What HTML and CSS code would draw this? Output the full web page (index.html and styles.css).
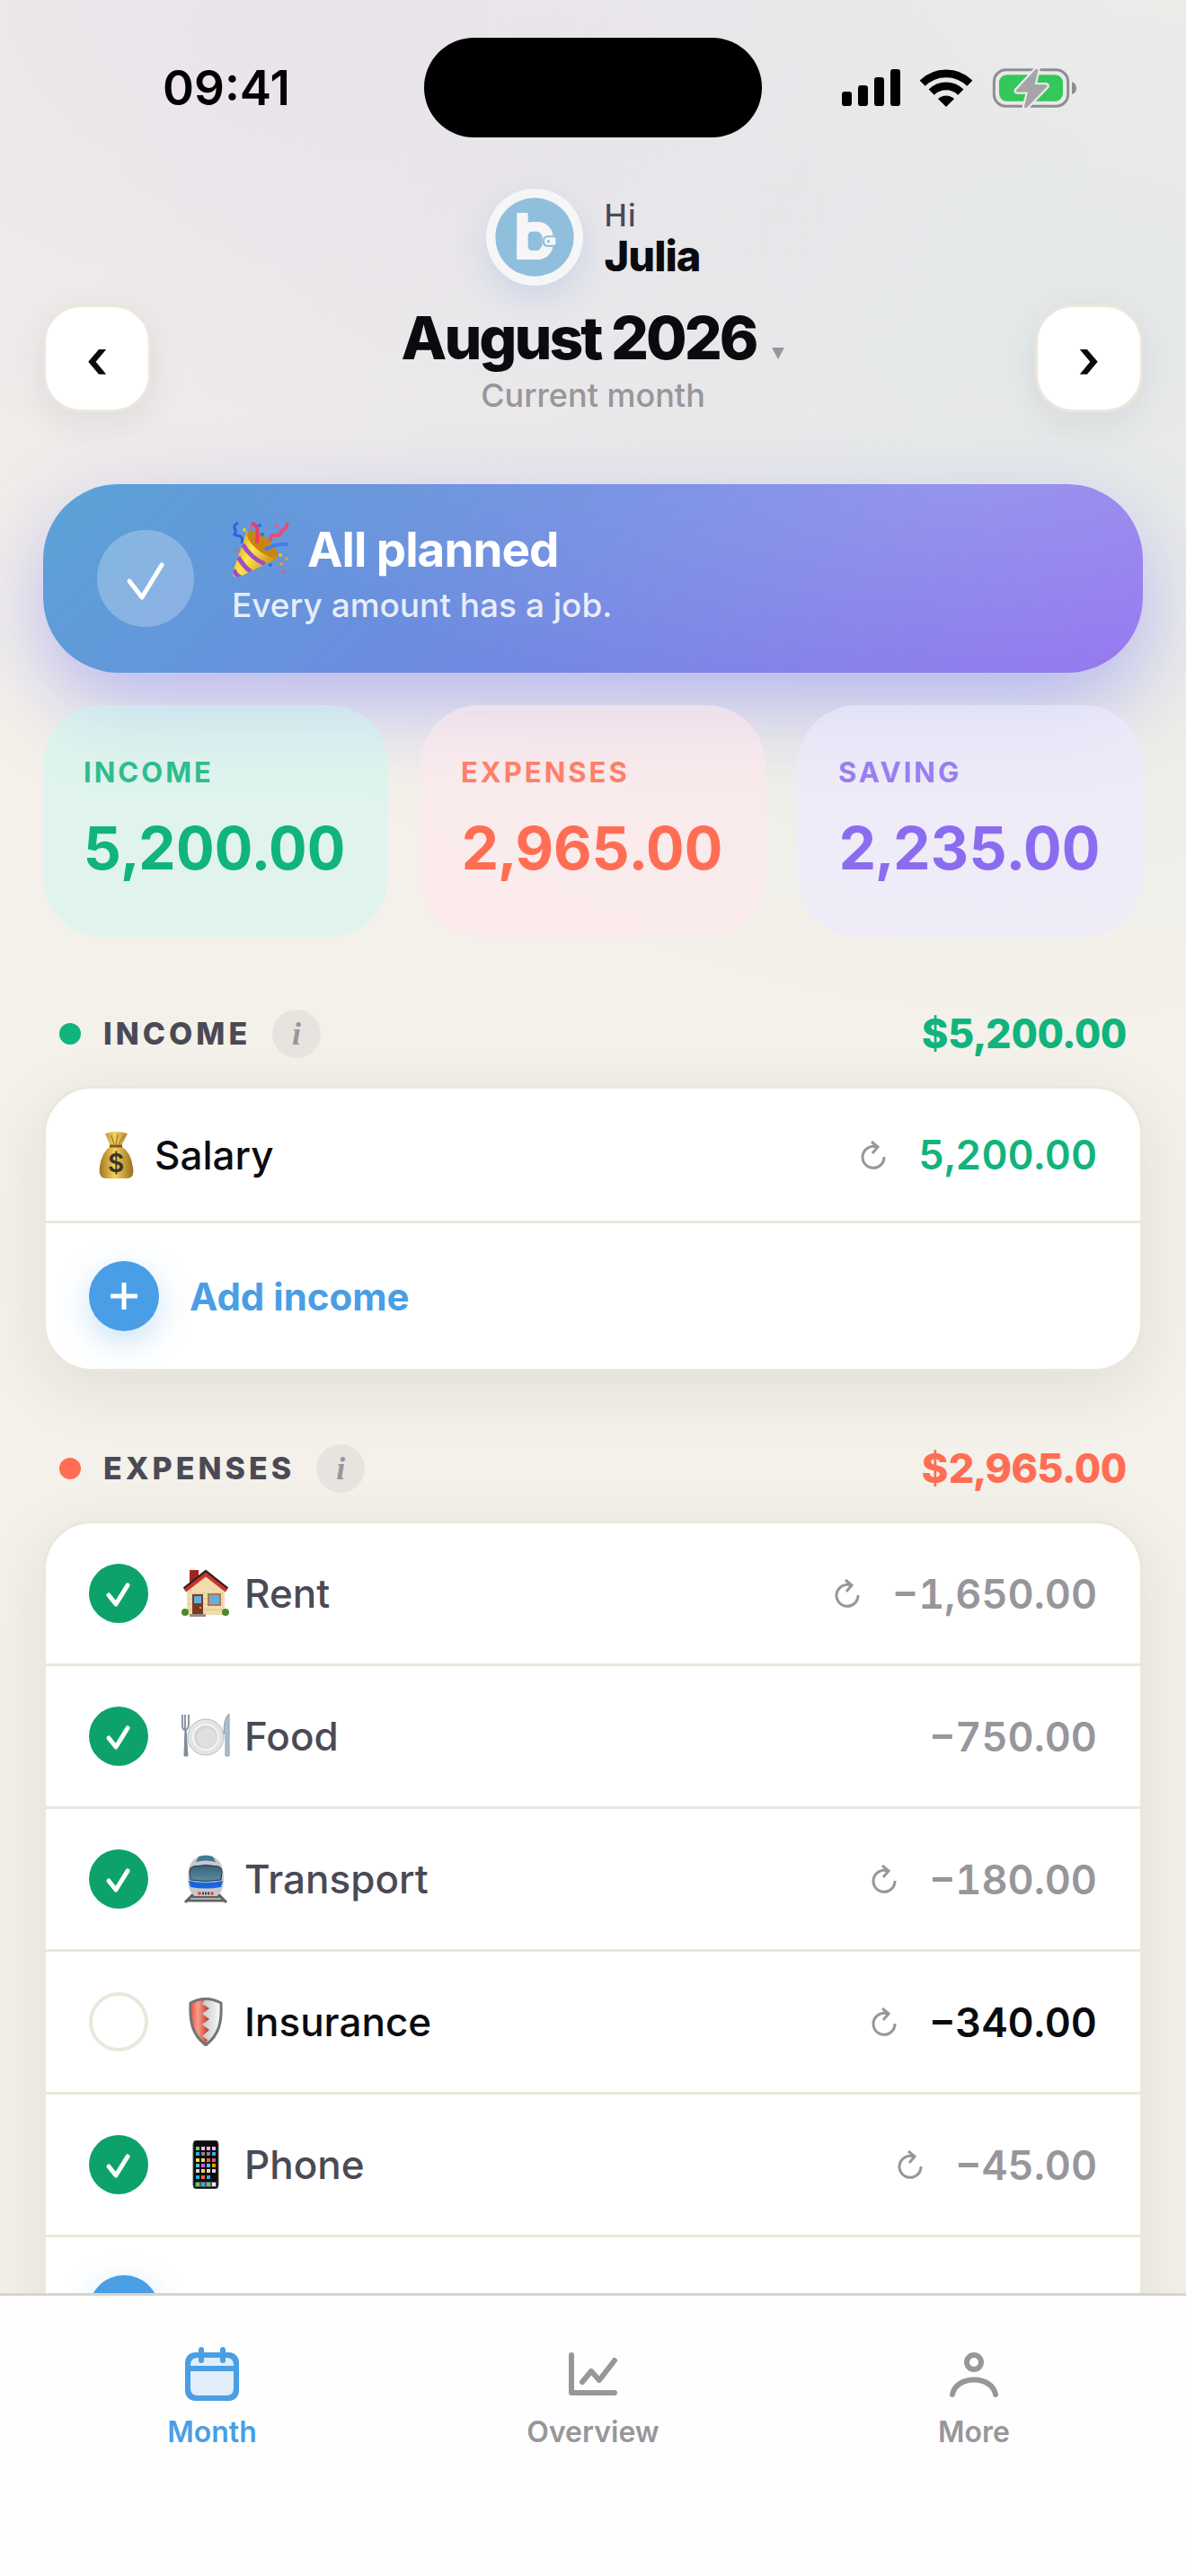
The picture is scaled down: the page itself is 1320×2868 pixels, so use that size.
FILE: index.html
```html
<!DOCTYPE html>
<html lang="en">
<head>
    <meta charset="UTF-8">
    <meta name="viewport" content="width=device-width, initial-scale=1.0">
    <title>August 2026</title>
    <link rel="stylesheet" href="styles.css">
</head>
<body>
    <!-- shared icons -->
    <svg class="sprite" aria-hidden="true">
        <symbol id="repeat" viewBox="0 0 28 32">
            <path d="M26 18A12 12 0 1 1 18 7M12 1L19 7L13 14" fill="none" stroke="currentColor" stroke-width="3"/>
        </symbol>
        <symbol id="tick" viewBox="0 0 66 66">
            <path d="M22 35L30 45L43 24" fill="none" stroke="#fff" stroke-width="5" stroke-linecap="round" stroke-linejoin="round"/>
        </symbol>
        <symbol id="plus" viewBox="0 0 32 32">
            <path d="M16 1V31M1 16H31" fill="none" stroke="#fff" stroke-width="5"/>
        </symbol>
    </svg>

    <div class="app">
        <div class="status">
            <span class="time">09:41</span>
            <span class="island"></span>
            <div class="status-icons">
                <svg width="65" height="41" viewBox="111 78 195 123">
                    <rect x="111" y="153" width="33" height="48" rx="10"/>
                    <rect x="165" y="132" width="33" height="69" rx="10"/>
                    <rect x="219" y="105" width="33" height="96" rx="10"/>
                    <rect x="273" y="78" width="33" height="123" rx="10"/>
                </svg>
                <svg width="58" height="42" viewBox="373 75 174 126">
                    <path d="M381 122A112 112 0 0 1 539 122M411 152A69 69 0 0 1 509 152" fill="none" stroke="#000" stroke-width="26"/>
                    <path d="M460 201L433 174A39 39 0 0 1 487 174Z"/>
                </svg>
                <svg width="95" height="48" viewBox="612 67 285 144">
                    <rect x="619" y="78" width="247" height="122" rx="40" fill="none" stroke="#8e8d91" stroke-width="9"/>
                    <path d="M879 119Q894 124 894 140T879 160Z" fill="#8e8d91"/>
                    <rect x="636" y="95" width="213" height="88" rx="26" fill="#34c759"/>
                    <path d="M760 76L694 147Q692 151 696 151H734L721 202Q724 207 728 203L795 134Q797 130 793 129H753L765 78Z" fill="#a5a4a7" stroke="#ebe9ec" stroke-width="16" stroke-linejoin="round"/>
                    <path d="M760 76L694 147Q692 151 696 151H734L721 202Q724 207 728 203L795 134Q797 130 793 129H753L765 78Z" fill="#a5a4a7" stroke="#a5a4a7" stroke-width="3" stroke-linejoin="round"/>
                </svg>
            </div>
        </div>

        <main class="content">
            <div class="profile">
                <svg class="avatar" viewBox="0 0 324 324">
                    <circle cx="162" cy="162" r="162" fill="#f6f6f7"/>
                    <circle cx="162" cy="162" r="131" fill="#90bfde"/>
                    <rect x="103" y="81" width="37" height="156" rx="4" fill="#f6f6f7"/>
                    <rect x="122" y="129" width="84" height="90" rx="34" fill="none" stroke="#f6f6f7" stroke-width="36"/>
                    <rect x="103" y="180" width="50" height="57" rx="3" fill="#f6f6f7"/>
                    <rect x="140" y="143" width="43" height="64" rx="14" fill="#90bfde"/>
                    <rect x="188" y="157" width="54" height="38" rx="17" fill="#90bfde"/>
                    <path d="M207 163H228Q232 163 232 167V184Q232 188 228 188H207A12 12 0 0 1 207 163Z" fill="#f6f6f7"/>
                    <circle cx="208" cy="176" r="5" fill="#90bfde"/>
                </svg>
                <div>
                    <p class="hi">Hi</p>
                    <p class="name">Julia</p>
                </div>
            </div>

            <header class="month">
                <button class="arrow" aria-label="Previous month">‹</button>
                <div class="month-text">
                    <button class="month-title">August 2026<svg width="14" height="13" viewBox="0 0 14 13"><path d="M0 0H14L7 13Z" fill="#98969b"/></svg></button>
                    <p>Current month</p>
                </div>
                <button class="arrow" aria-label="Next month">›</button>
            </header>

            <section class="banner">
                <svg class="banner-check" viewBox="0 0 108 108">
                    <circle cx="54" cy="54" r="54" fill="#fff" fill-opacity=".25"/>
                    <path d="M36 57L50 75L72 39" fill="none" stroke="#fff" stroke-width="5" stroke-linecap="round" stroke-linejoin="round"/>
                </svg>
                <div class="banner-text">
                    <h2>
                        <svg width="64" height="64" viewBox="0 0 64 64">
                            <defs>
                                <linearGradient id="cone" x1="0" y1="0" x2="1" y2=".6"><stop offset="0" stop-color="#c98a12"/><stop offset=".5" stop-color="#ffe74a"/><stop offset="1" stop-color="#c8870f"/></linearGradient>
                                <clipPath id="cone-clip"><path d="M17 11L51 38Q52 43 44 45L7 63Q1 63 1 57Z"/></clipPath>
                            </defs>
                            <path d="M17 11L51 38Q52 43 44 45L7 63Q1 63 1 57Z" fill="url(#cone)"/>
                            <path d="M12 26Q22 42 37 48M7 40Q14 52 22 57M2 54Q4 60 10 63" clip-path="url(#cone-clip)" fill="none" stroke="#9b4fc9" stroke-width="5"/>
                            <ellipse cx="34" cy="26" rx="21" ry="8" transform="rotate(39 34 26)" fill="#c98514"/>
                            <path d="M22 3C30 4 29 14 28 25" fill="none" stroke="#ee3b62" stroke-width="4"/>
                            <path d="M43 23C43 10 52 20 54 14S60 12 62 2" fill="none" stroke="#e94a78" stroke-width="4"/>
                            <path d="M37 32Q48 25 63 26" fill="none" stroke="#3d7ff0" stroke-width="4"/>
                            <path d="M7 2C-3 8 8 8 3 15C4 18 14 13 11 25" fill="none" stroke="#2c65dd" stroke-width="3"/>
                            <g fill="#2c6de0"><circle cx="31" cy="5" r="2"/><circle cx="34" cy="15" r="2"/><circle cx="43" cy="49" r="2"/></g>
                            <g fill="#f0be35"><circle cx="14" cy="10" r="2"/><circle cx="54" cy="38" r="2"/></g>
                            <g fill="#f3962e"><circle cx="61" cy="42" r="2"/><circle cx="55" cy="48" r="2"/></g>
                            <g fill="#e55b87"><circle cx="50" cy="5" r="2"/><circle cx="57" cy="56" r="2"/><circle cx="6" cy="33" r="2"/><circle cx="21" cy="7" r="2"/></g>
                        </svg>
                        All planned
                    </h2>
                    <p>Every amount has a job.</p>
                </div>
            </section>

            <section class="totals">
                <div class="total total-income"><h3>INCOME</h3><p>5,200.00</p></div>
                <div class="total total-expenses"><h3>EXPENSES</h3><p>2,965.00</p></div>
                <div class="total total-saving"><h3>SAVING</h3><p>2,235.00</p></div>
            </section>

            <section>
                <div class="section-head income">
                    <span class="dot"></span>
                    <h2>INCOME</h2>
                    <button class="info" aria-label="About income">i</button>
                    <strong>$5,200.00</strong>
                </div>
                <ul class="list">
                    <li class="row row-income">
                        <svg class="emoji" viewBox="0 0 54 54">
                            <defs><linearGradient id="bag"><stop offset="0" stop-color="#a37322"/><stop offset=".45" stop-color="#f2d15e"/><stop offset="1" stop-color="#9c6b1c"/></linearGradient></defs>
                            <path d="M15 3Q27 -1 40 3L33 17Q44 24 46 41Q48 53 39 53H16Q7 53 9 40Q11 24 21 17Z" fill="url(#bag)"/>
                            <path d="M20 17H34" stroke="#85561a" stroke-width="3"/>
                            <path d="M22 5L25 15M29 4L27 15M36 5L30 15" stroke="#95661d" stroke-width="1"/>
                            <text x="27" y="46" text-anchor="middle" class="dollar">$</text>
                        </svg>
                        <span class="label">Salary</span>
                        <svg class="repeat"><use href="#repeat"/></svg>
                        <span class="amount">5,200.00</span>
                    </li>
                    <li>
                        <button class="add"><span class="add-icon"><svg width="32" height="32"><use href="#plus"/></svg></span>Add income</button>
                    </li>
                </ul>
            </section>

            <section>
                <div class="section-head expenses">
                    <span class="dot"></span>
                    <h2>EXPENSES</h2>
                    <button class="info" aria-label="About expenses">i</button>
                    <strong>$2,965.00</strong>
                </div>
                <ul class="list">
                    <li class="row">
                        <span class="check"><input type="checkbox" id="rent" checked><svg><use href="#tick"/></svg></span>
                        <svg class="emoji" viewBox="0 0 54 54">
                            <path d="M6 23L27 4L48 23V51H6Z" fill="#f0dcae"/>
                            <path d="M8 27H46M8 33H46M8 39H46M8 45H46" stroke="#dcc390" stroke-width="1"/>
                            <path d="M9 1H19V9L9 17Z" fill="#a5241c"/>
                            <path d="M3 22L27 3L51 22" fill="none" stroke="#2b2422" stroke-width="4"/>
                            <path d="M4 24L27 6L50 24" fill="none" stroke="#cf3328" stroke-width="4"/>
                            <rect x="12" y="28" width="12" height="24" fill="#783a24"/>
                            <rect x="14" y="30" width="8" height="8" fill="#62afe0"/>
                            <circle cx="21" cy="43" r="1" fill="#f4c542"/>
                            <rect x="29" y="27" width="15" height="14" fill="#a87c53"/>
                            <rect x="31" y="29" width="11" height="10" fill="#67aedb"/>
                            <rect x="9" y="50" width="18" height="3" fill="#9c8a7d"/>
                            <circle cx="4" cy="48" r="4" fill="#4c8a2b"/><circle cx="49" cy="48" r="4" fill="#4c8a2b"/>
                        </svg>
                        <label class="label" for="rent">Rent</label>
                        <svg class="repeat"><use href="#repeat"/></svg>
                        <span class="amount">−1,650.00</span>
                    </li>
                    <li class="row">
                        <span class="check"><input type="checkbox" id="food" checked><svg><use href="#tick"/></svg></span>
                        <svg class="emoji" viewBox="0 0 54 54">
                            <circle cx="27" cy="28" r="20" fill="#e3e4e5" stroke="#b9bbbd" stroke-width="1"/>
                            <circle cx="27" cy="28" r="14" fill="#d3d4d5" stroke="#f5f6f7" stroke-width="2"/>
                            <circle cx="28" cy="29" r="11" fill="#dedfdf"/>
                            <path d="M1 3V15Q1 20 4 20T8 15V3M4 3V20" fill="none" stroke="#8b97a3" stroke-width="2"/>
                            <path d="M4 20L3 49H7L5 20Z" fill="#7e8b99" stroke="#7e8b99"/>
                            <path d="M53 2Q47 6 47 24H49V49H53Z" fill="#a9bfd2" stroke="#8b9cac"/>
                        </svg>
                        <label class="label" for="food">Food</label>
                        <span class="amount">−750.00</span>
                    </li>
                    <li class="row">
                        <span class="check"><input type="checkbox" id="transport" checked><svg><use href="#tick"/></svg></span>
                        <svg class="emoji" viewBox="0 0 54 54">
                            <defs><linearGradient id="glass" x2="0" y2="1"><stop offset="0" stop-color="#386078"/><stop offset="1" stop-color="#5a8da4"/></linearGradient></defs>
                            <path d="M14 43L4 53M40 43L50 53M9 47H45M6 51H48" stroke="#626262" stroke-width="3"/>
                            <path d="M27 1C42 1 47 12 47 25C47 38 43 46 37 46H17C11 46 7 38 7 25C7 12 12 1 27 1Z" fill="#c6cace"/>
                            <path d="M19 2Q27 -1 35 2L38 8Q27 5 16 8Z" fill="#457992"/>
                            <path d="M13 13Q27 10 41 13Q45 14 45 19L44 28Q27 31 10 28L9 19Q9 14 13 13Z" fill="url(#glass)" stroke="#26343b"/>
                            <path d="M8 29Q27 33 46 29L44 36Q27 39 10 36Z" fill="#1865e4"/>
                            <g fill="#e05140"><circle cx="20" cy="43" r="2"/><circle cx="34" cy="43" r="2"/></g>
                            <path d="M23 43H32" stroke="#444" stroke-width="3" stroke-dasharray="2 1"/>
                        </svg>
                        <label class="label" for="transport">Transport</label>
                        <svg class="repeat"><use href="#repeat"/></svg>
                        <span class="amount">−180.00</span>
                    </li>
                    <li class="row">
                        <span class="check"><input type="checkbox" id="insurance"><svg><use href="#tick"/></svg></span>
                        <svg class="emoji" viewBox="0 0 54 54">
                            <defs>
                                <linearGradient id="red"><stop offset="0" stop-color="#e2503d"/><stop offset=".4" stop-color="#fd9c8a"/><stop offset="1" stop-color="#b83420"/></linearGradient>
                                <linearGradient id="silver"><stop offset="0" stop-color="#a3a7aa"/><stop offset="1" stop-color="#fbfcfd"/></linearGradient>
                            </defs>
                            <path d="M10 6Q27 -3 44 6C45 28 42 41 27 53C12 41 9 28 10 6Z" fill="url(#silver)"/>
                            <path d="M10 6Q19 1 27 1L23 7L31 12L23 18L31 24L23 30L31 36L23 43L29 47L27 53C12 41 9 28 10 6Z" fill="url(#red)"/>
                            <path d="M10 6Q27 -3 44 6C45 28 42 41 27 53C12 41 9 28 10 6Z" fill="none" stroke="#727578" stroke-width="3"/>
                        </svg>
                        <label class="label" for="insurance">Insurance</label>
                        <svg class="repeat"><use href="#repeat"/></svg>
                        <span class="amount">−340.00</span>
                    </li>
                    <li class="row">
                        <span class="check"><input type="checkbox" id="phone" checked><svg><use href="#tick"/></svg></span>
                        <svg class="emoji" viewBox="0 0 54 54">
                            <rect x="13" y="0" width="28" height="54" rx="4" fill="#0c0c0d" stroke="#555" stroke-width="1"/>
                            <g stroke-width="4" stroke-dasharray="4 2">
                                <path d="M16 9H38" stroke="#63d96c"/><path d="M22 9H38" stroke="#e5b8ef"/>
                                <path d="M16 15H38" stroke="#27aef5"/><path d="M22 15H32" stroke="#8f8279"/>
                                <path d="M16 22H38" stroke="#f5d94b"/><path d="M28 22H38" stroke="#e45752"/>
                                <path d="M16 28H38" stroke="#4fc8d3"/><path d="M22 28H26" stroke="#dd4edc"/><path d="M34 28H38" stroke="#ff9500"/>
                                <path d="M16 34H38" stroke="#d8d8d8"/><path d="M22 34H26" stroke="#f5d94b"/>
                                <path d="M16 41H32" stroke="#27aef5"/><path d="M22 41H26" stroke="#ff6259"/>
                            </g>
                            <rect x="15" y="46" width="24" height="6" rx="1" fill="#555"/>
                            <path d="M16 49H38" stroke="#4cd964" stroke-width="4" stroke-dasharray="4 2"/><path d="M22 49H26" stroke="#27aef5" stroke-width="4"/><path d="M34 49H38" stroke="#eee" stroke-width="4"/>
                        </svg>
                        <label class="label" for="phone">Phone</label>
                        <svg class="repeat"><use href="#repeat"/></svg>
                        <span class="amount">−45.00</span>
                    </li>
                    <li>
                        <button class="add" aria-label="Add expense"><span class="add-icon"><svg width="32" height="32"><use href="#plus"/></svg></span></button>
                    </li>
                </ul>
            </section>
        </main>

        <nav class="tabs">
            <a href="#" class="active">
                <svg viewBox="0 0 72 72">
                    <rect x="9" y="12" width="54" height="48" rx="10" fill="#e1edf9"/>
                    <path d="M19 12H53Q63 12 63 22V50Q63 60 53 60H19Q9 60 9 50V22Q9 12 19 12ZM9 27H63M24 6V18M48 6V18"/>
                </svg>
                Month
            </a>
            <a href="#">
                <svg viewBox="0 0 72 72"><path d="M12 12V54H60M24 42L34 30L43 40L60 18"/></svg>
                Overview
            </a>
            <a href="#">
                <svg viewBox="0 0 72 72"><circle cx="36" cy="20" r="8"/><path d="M12 56C16 34 56 34 60 56"/></svg>
                More
            </a>
        </nav>
    </div>
</body>
</html>
```

FILE: styles.css
```css
* {
    margin: 0;
    padding: 0;
    box-sizing: border-box;
}

body {
    font-family: Inter, "Liberation Sans", sans-serif;
    color: #0b0b0f;
    background-color: #f4f1ea;
}

button {
    font-family: inherit;
    color: inherit;
    background: none;
    border: 0;
    cursor: pointer;
}

.sprite {
    display: none;
}

.app {
    height: 100vh;
    display: flex;
    flex-direction: column;
    background:
        radial-gradient(ellipse 1000px 800px at 20% 0, rgba(139, 92, 246, 0.09), transparent),
        radial-gradient(ellipse 1100px 800px at 90% 12%, rgba(74, 144, 220, 0.09), transparent);
}

.status {
    display: grid;
    grid-template-columns: 1fr 376px 1fr;
    align-items: center;
    justify-items: center;
    padding: 42px 32px 0;
    flex-shrink: 0;
}

.time {
    font-size: 53px;
    font-weight: 600;
    line-height: 60px;
    color: #000;
}

.island {
    width: 376px;
    height: 111px;
    border-radius: 56px;
    background-color: #000;
}

.status-icons {
    display: flex;
    align-items: center;
    gap: 22px;
}

.content {
    flex: 1;
    min-height: 0;
    overflow-y: auto;
    scrollbar-width: none;
    padding: 57px 48px 0;
}

.profile {
    display: flex;
    justify-content: center;
    align-items: center;
    gap: 24px;
}

.avatar {
    width: 108px;
    height: 108px;
    border-radius: 50%;
    box-shadow: 0 12px 36px rgba(74, 144, 226, 0.2);
}

.hi {
    font-size: 34px;
    font-weight: 500;
    line-height: 42px;
    letter-spacing: 1px;
    color: #4a4a56;
}

.name {
    font-size: 47px;
    font-weight: 800;
    line-height: 48px;
    letter-spacing: -1px;
}

.month {
    display: flex;
    justify-content: space-between;
    align-items: center;
    margin-top: 18px;
}

.arrow {
    width: 120px;
    height: 120px;
    font-size: 60px;
    font-weight: 600;
    background-color: #fff;
    border: 3px solid #ebe7db;
    border-radius: 42px;
    box-shadow: 0 12px 42px rgba(30, 30, 60, 0.08);
}

.month-text {
    padding-top: 4px;
    text-align: center;
}

.month-title {
    font-size: 66px;
    font-weight: 800;
    line-height: 72px;
    letter-spacing: -3px;
}

.month-title svg {
    margin-left: 18px;
}

.month-text p {
    margin-top: 6px;
    font-size: 36px;
    font-weight: 500;
    line-height: 44px;
    color: #98969b;
}

.banner {
    display: flex;
    align-items: center;
    gap: 42px;
    margin-top: 77px;
    padding: 0 60px;
    height: 210px;
    border-radius: 84px;
    color: #fff;
    background:
        radial-gradient(ellipse 70% 120% at 85% 0, rgba(255, 255, 255, 0.16), transparent),
        linear-gradient(135deg, #5aa3d6, #6b8ddf 40%, #9575f1);
    box-shadow: 0 36px 96px rgba(100, 105, 245, 0.42);
}

.banner-check {
    width: 108px;
    height: 108px;
}

.banner-text {
    padding-bottom: 12px;
}

.banner h2 {
    display: flex;
    align-items: center;
    gap: 20px;
    font-size: 53px;
    font-weight: 700;
    line-height: 64px;
    letter-spacing: -1px;
}

.banner p {
    margin-top: 8px;
    font-size: 37px;
    font-weight: 500;
    line-height: 44px;
    color: rgba(255, 255, 255, 0.85);
}

.totals {
    display: grid;
    grid-template-columns: repeat(3, 1fr);
    gap: 36px;
    margin-top: 36px;
}

.total {
    height: 258px;
    padding: 54px 45px;
    border-radius: 66px;
}

.total h3 {
    font-size: 31px;
    font-weight: 700;
    line-height: 42px;
    letter-spacing: 3px;
    opacity: 0.85;
}

.total p {
    margin-top: 30px;
    font-size: 66px;
    font-weight: 700;
    line-height: 66px;
    font-variant-numeric: tabular-nums;
}

.total-income {
    color: #10b47c;
    background-color: rgba(200, 248, 241, 0.45);
}

.total-expenses {
    color: #ff6e54;
    background-color: rgba(255, 232, 236, 0.6);
}

.total-saving {
    color: #8b6cf0;
    background-color: rgba(237, 233, 255, 0.65);
}

.section-head {
    display: flex;
    align-items: center;
    margin-top: 80px;
    padding: 0 18px;
}

.section-head h2 {
    margin-left: 25px;
    font-size: 34px;
    font-weight: 800;
    line-height: 42px;
    letter-spacing: 4px;
    color: #4a4a56;
}

.dot {
    width: 24px;
    height: 24px;
    border-radius: 50%;
    background-color: currentColor;
}

.info {
    width: 54px;
    height: 54px;
    margin-left: 24px;
    border-radius: 50%;
    background-color: #e7e4df;
    color: #98969b;
    font: italic bold 36px "Liberation Serif", serif;
}

.section-head strong {
    margin-left: auto;
    font-size: 45px;
    font-weight: 800;
    font-variant-numeric: tabular-nums;
}

.income {
    color: #10b47c;
}

.expenses {
    color: #ff6e54;
}

.list {
    list-style: none;
    margin-top: 31px;
    background-color: #fff;
    border: 3px solid #ebe7db;
    border-radius: 54px;
    box-shadow: 0 18px 72px rgba(30, 30, 60, 0.09);
}

.list li + li {
    border-top: 3px solid #ebe7db;
}

.row {
    display: flex;
    align-items: center;
    height: 156px;
    padding: 0 48px;
}

.list .row + .row {
    height: 159px;
}

.row-income {
    height: 147px;
    color: #10b47c;
}

.check {
    display: grid;
    margin-right: 37px;
}

.check input,
.check svg {
    grid-area: 1 / 1;
    width: 66px;
    height: 66px;
}

.check input {
    appearance: none;
    border: 4px solid #ebe7db;
    border-radius: 50%;
}

.check input:checked {
    border: 0;
    background-color: #0ea26b;
}

.check svg {
    pointer-events: none;
}

.check input:not(:checked) + svg {
    visibility: hidden;
}

.emoji {
    width: 54px;
    height: 54px;
    margin-right: 16px;
}

.row-income .emoji {
    margin-left: 3px;
}

.dollar {
    font-size: 28px;
    font-weight: 600;
    fill: #3d3322;
}

.label {
    flex: 1;
    font-size: 44px;
    font-weight: 500;
    color: #0b0b0f;
}

.check:has(:checked) ~ .label {
    color: #4a4a56;
}

.repeat {
    width: 28px;
    height: 32px;
    margin-right: 36px;
    color: #98969b;
}

.amount {
    font-size: 45px;
    font-weight: 600;
    font-variant-numeric: tabular-nums;
}

.check:has(:checked) ~ .amount {
    color: #98969b;
}

.add {
    display: flex;
    align-items: center;
    gap: 34px;
    width: 100%;
    height: 162px;
    padding: 0 48px;
    font-size: 42px;
    font-weight: 700;
    color: #4a9ee5;
}

.add-icon {
    display: grid;
    place-items: center;
    width: 78px;
    height: 78px;
    border-radius: 50%;
    background-color: #4a9ee5;
    box-shadow: 0 12px 36px rgba(74, 158, 229, 0.3);
}

.tabs {
    display: grid;
    grid-template-columns: repeat(3, 1fr);
    flex-shrink: 0;
    padding: 54px 24px 139px;
    background-color: #fefefe;
    border-top: 3px solid #d8d4cb;
}

.tabs a {
    display: flex;
    flex-direction: column;
    align-items: center;
    gap: 5px;
    font-size: 32px;
    font-weight: 600;
    line-height: 42px;
    text-decoration: none;
    color: #98969b;
}

.tabs .active {
    color: #4a9ee5;
}

.tabs svg {
    width: 72px;
    height: 72px;
    fill: none;
    stroke: currentColor;
    stroke-width: 6;
    stroke-linecap: round;
    stroke-linejoin: round;
}
```
